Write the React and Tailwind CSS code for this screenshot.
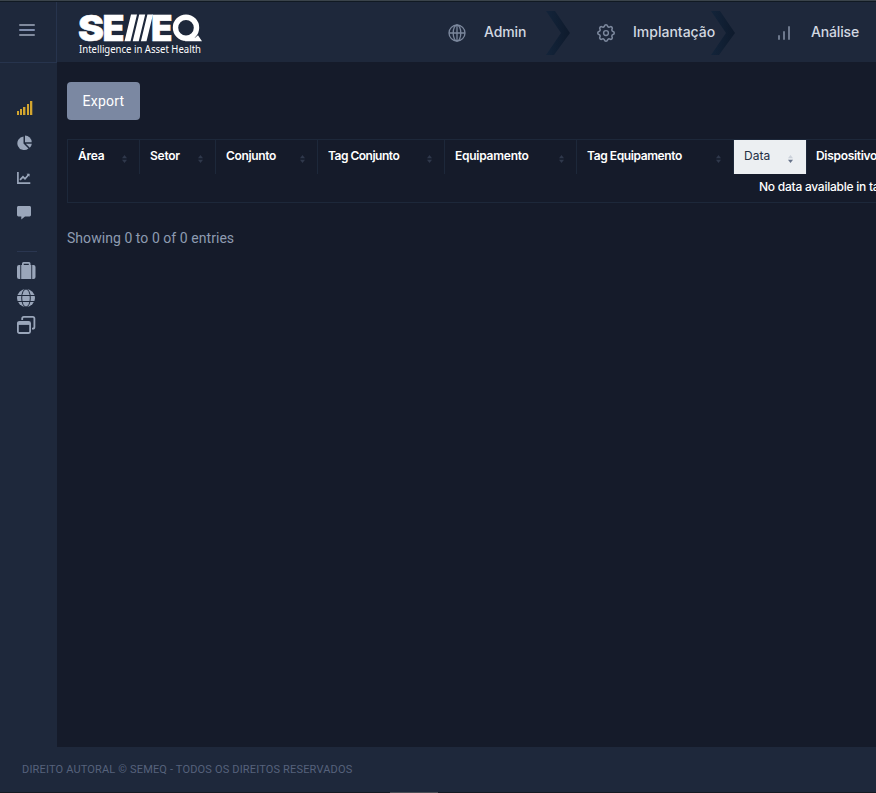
import React from "react";

const columns = [
  { label: "Área", cell: "w-[72px]", text: "tracking-[-0.25px]" },
  { label: "Setor", cell: "w-[76px]", text: "tracking-[-0.25px]" },
  { label: "Conjunto", cell: "w-[102px]", text: "tracking-[-0.35px]" },
  { label: "Tag Conjunto", cell: "w-[127px]", text: "tracking-[-0.5px]" },
  { label: "Equipamento", cell: "w-[132px]", text: "tracking-[-0.25px]" },
  { label: "Tag Equipamento", cell: "w-[157px]", text: "tracking-[-0.4px]" },
  { label: "Data", cell: "w-[73px]", text: "tracking-[0px]", active: true },
  { label: "Dispositivo", cell: "w-[110px]", text: "-ml-px tracking-[-0.3px]" },
];

function Logo() {
  return (
    <svg width="126" height="46" viewBox="0 0 126 46" className="block overflow-visible" fill="#fff">
      <g fontFamily="Inter, sans-serif" fontWeight="900" fontSize="36" stroke="#fff" strokeWidth="0.5">
        <text x="0" y="30" textLength="26" lengthAdjust="spacingAndGlyphs">S</text>
        <text x="24.5" y="30" textLength="22" lengthAdjust="spacingAndGlyphs">E</text>
        <text x="73" y="30" textLength="21.5" lengthAdjust="spacingAndGlyphs">E</text>
      </g>
      <path d="M53 3.6h6l-6.500 26.600h-6zM61.200 3.600h6l-6.500 26.600h-6zM69.400 3.600h5.600l-6.500 26.600h-5.600z" />
      <circle cx="108" cy="16.7" r="10.5" fill="none" stroke="#fff" strokeWidth="5.4" />
      <path d="M107 30.2l6-7 4 3.600 3-2.600 4 6z" />
      <text x="1" y="41.8" fontFamily="'Noto Sans', 'Open Sans', sans-serif" fontSize="10.3" textLength="122" lengthAdjust="spacingAndGlyphs">
        Intelligence in Asset Health
      </text>
    </svg>
  );
}

function GlobeLine() {
  return (
    <svg width="18" height="18" viewBox="0 0 18 18" className="block" fill="none" stroke="#7c889d" strokeWidth="1.3">
      <circle cx="9" cy="9" r="8" />
      <ellipse cx="9" cy="9" rx="3.8" ry="8" />
      <path d="M1 9h16M9 1v16" />
    </svg>
  );
}

function Gear() {
  return (
    <svg width="20" height="20" viewBox="0 0 24 24" className="block" fill="none" stroke="#7c889d" strokeWidth="1.7">
      <path d="M10.325 4.317c.426-1.756 2.924-1.756 3.35 0a1.724 1.724 0 002.573 1.066c1.543-.94 3.31.826 2.37 2.37a1.724 1.724 0 001.065 2.572c1.756.426 1.756 2.924 0 3.35a1.724 1.724 0 00-1.066 2.573c.94 1.543-.826 3.31-2.37 2.37a1.724 1.724 0 00-2.572 1.065c-.426 1.756-2.924 1.756-3.35 0a1.724 1.724 0 00-2.573-1.066c-1.543.94-3.31-.826-2.37-2.37a1.724 1.724 0 00-1.065-2.572c-1.756-.426-1.756-2.924 0-3.35a1.724 1.724 0 001.066-2.573c-.94-1.543.826-3.31 2.37-2.37.996.608 2.296.07 2.572-1.065z" transform="translate(12 12) scale(1.1) translate(-12 -12)" />
      <circle cx="12" cy="12" r="2.9" />
    </svg>
  );
}

function Chevron({ id }) {
  return (
    <svg width="24" height="44" viewBox="0 0 24 44" className="block shrink-0">
      <defs>
        <linearGradient id={id} x1="0" x2="1" y1="0" y2="0">
          <stop offset="0" stopColor="#13243a" />
          <stop offset="1" stopColor="#0e1a2c" />
        </linearGradient>
      </defs>
      <path d="M0 0h9l15 22L8 44H0l15-22z" fill={`url(#${id})`} />
    </svg>
  );
}

function Sort({ active }) {
  return (
    <svg width="5" height="8" viewBox="0 0 5 8" className="block">
      <path d="M2.5 0L5 3.2H0z" fill={active ? "#cbd1da" : "#2f384b"} />
      <path d="M2.5 8L5 4.8H0z" fill={active ? "#67738a" : "#2f384b"} />
    </svg>
  );
}

function Sidebar() {
  return (
    <aside className="flex w-[57px] shrink-0 flex-col pl-[17px] pt-[38px]">
      <svg width="16" height="14" viewBox="0 0 16 14" fill="#d3a52f" className="mt-px block">
        <path d="M0 10h2v4H0zM3 8h2v6H3zM6 6h2.4v8H6zM10 3h2v11h-2zM13 0h2.3v14H13z" />
      </svg>
      <svg width="16" height="16" viewBox="0 0 16 16" fill="#9aa6ba" className="mt-5 block">
        <path d="M6.5 1.5v7l5 5A6.8 6.8 0 1 1 6.5 1.5z" />
        <path d="M8 0.5a6.7 6.7 0 0 1 6.7 6.7H8z" />
        <path d="M8.8 8.7h6a6.7 6.7 0 0 1-2 4z" />
      </svg>
      <svg width="14" height="12" viewBox="0 0 14 12" fill="none" stroke="#9aa6ba" strokeWidth="1.7" className="mt-[21px] block">
        <path d="M.9 0v11.1H13.3" />
        <path d="M3 7.8l3-3 2 2 4-4.6" />
        <path d="M9.5 1.7h3v3z" fill="#9aa6ba" stroke="none" />
      </svg>
      <svg width="14" height="14" viewBox="0 0 14 14" fill="#9aa6ba" className="mt-[22px] block">
        <path d="M1.5 0h11A1.4 1.4 0 0 1 14 1.4v7.7a1.4 1.4 0 0 1-1.4 1.4H8L4.3 13.5v-3H1.4A1.4 1.4 0 0 1 0 9.1V1.4A1.4 1.4 0 0 1 1.5 0z" />
      </svg>
      <div className="mt-[31px] h-px w-5 bg-[#2a3650]" />
      <svg width="19" height="17" viewBox="0 0 19 17" fill="#9aa6ba" className="mt-[10px] block">
        <path d="M3.3 3v14H2a2 2 0 0 1-2-2V5a2 2 0 0 1 2-2zM15.2 3v14H16.5a2 2 0 0 0 2-2V5a2 2 0 0 0-2-2z" />
        <path fillRule="evenodd" d="M4.2 17V3H5V1.5A1.5 1.5 0 0 1 6.5 0h5.5A1.5 1.5 0 0 1 13.5 1.5V3h.8v14zM6.7 3h5.1V1.7H6.7z" />
      </svg>
      <svg width="18" height="18" viewBox="0 0 18 18" className="mt-[10px] block">
        <circle cx="9" cy="9" r="9" fill="#9aa6ba" />
        <g fill="none" stroke="#1e283b" strokeWidth="1">
          <ellipse cx="9" cy="9" rx="4.3" ry="9" />
          <path d="M0 6.5h18M0 12.5h18" />
        </g>
      </svg>
      <svg width="19" height="18" viewBox="0 0 19 18" fill="none" stroke="#9aa6ba" strokeWidth="1.8" className="mt-[9px] block">
        <path d="M5.2 4V2.5A1.6 1.6 0 0 1 6.8.9H15.7a1.7 1.7 0 0 1 1.7 1.7v8.3a1.7 1.7 0 0 1-1.7 1.7H15" />
        <rect x=".9" y="5.8" width="12.2" height="11.2" rx="1.5" />
        <path d="M1 6h12v2.9H1z" fill="#9aa6ba" stroke="none" />
      </svg>
    </aside>
  );
}

export default function App() {
  return (
    <div className="flex h-[793px] w-[876px] flex-col overflow-hidden bg-[#1e283b] font-['Inter','Liberation_Sans',sans-serif]">
      <div className="h-px shrink-0 bg-[#3b444b]" />
      <div className="h-px shrink-0 bg-[#111a23]" />
      <header className="flex h-[60px] shrink-0">
        <div className="flex h-[61px] w-[57px] shrink-0 flex-col gap-[3px] border-r border-b border-[#27344d] pl-[19px] pt-[22px]">
          <div className="h-[2px] w-4 rounded bg-[#808a9d]" />
          <div className="h-[2px] w-4 rounded bg-[#808eac]" />
          <div className="h-[2px] w-4 rounded bg-[#808a9d]" />
        </div>
        <div className="w-[391px] shrink-0 pl-[21px] pt-[9px]"><Logo /></div>
        <nav className="flex items-center whitespace-nowrap text-sm font-medium text-[#d2d8e1]">
          <div className="mt-[2px]"><GlobeLine /></div>
          <span className="ml-[18px] w-[62px] shrink-0 tracking-[-0.1px]">Admin</span>
          <div className="mt-[2px]"><Chevron id="step-one" /></div>
          <div className="ml-[26px] mt-[2px]"><Gear /></div>
          <span className="z-10 ml-[17px] w-[78px] shrink-0">Implantação</span>
          <div className="mt-[2px]"><Chevron id="step-two" /></div>
          <svg width="12" height="14" viewBox="0 0 12 14" fill="#6d788d" className="ml-[43px] mt-[2px] block shrink-0">
            <rect x="0" y="9" width="2" height="5" rx="1" />
            <rect x="5" y="5" width="2" height="9" rx="1" />
            <rect x="10" y="0" width="2" height="14" rx="1" />
          </svg>
          <span className="ml-[21px] tracking-[-0.15px]">Análise</span>
        </nav>
      </header>
      <div className="flex h-[685px] shrink-0">
        <Sidebar />
        <main className="min-w-0 flex-1 overflow-hidden bg-[#151b2a] pl-[10px] pt-5">
          <button className="block h-[38px] w-[73px] rounded bg-[#7b88a2] pb-px font-[Roboto,sans-serif] text-sm tracking-[0.25px] text-white">Export</button>
          <div className="mt-[19px] h-16 w-[1100px] border border-[#1d283a] text-xs text-white">
            <div className="-ml-px flex h-[34px]">
              {columns.map((c) => (
                <div
                  key={c.label}
                  className={`flex shrink-0 items-start justify-between whitespace-nowrap border-l border-[#1d283a] pl-[10px] pt-2 ${c.cell} ${c.active ? "bg-[#eceff2] pr-[13px] text-[#253044]" : "pr-3 font-semibold"}`}
                >
                  <span className={c.text}>{c.label}</span>
                  <div className="mt-[7px]"><Sort active={c.active} /></div>
                </div>
              ))}
            </div>
            <div className="whitespace-nowrap pl-[691px] pt-[5px] font-medium tracking-[-0.25px]">No data available in table</div>
          </div>
          <p className="mt-[25px] whitespace-nowrap font-[Roboto,sans-serif] text-sm tracking-[0.05px] text-[#8e9bb1]">Showing 0 to 0 of 0 entries</p>
        </main>
      </div>
      <footer className="flex h-[45px] shrink-0 items-center whitespace-nowrap pl-[22px] pt-px font-[Roboto,sans-serif] text-[11px] tracking-[0.17px] text-[#56627b]">
        <span>DIREITO AUTORAL © SEMEQ - TODOS OS DIREITOS RESERVADOS</span>
      </footer>
      <div className="h-px shrink-0 bg-[#151a22] pl-[390px]"><div className="h-px w-12 bg-[#4a4e55]" /></div>
    </div>
  );
}
